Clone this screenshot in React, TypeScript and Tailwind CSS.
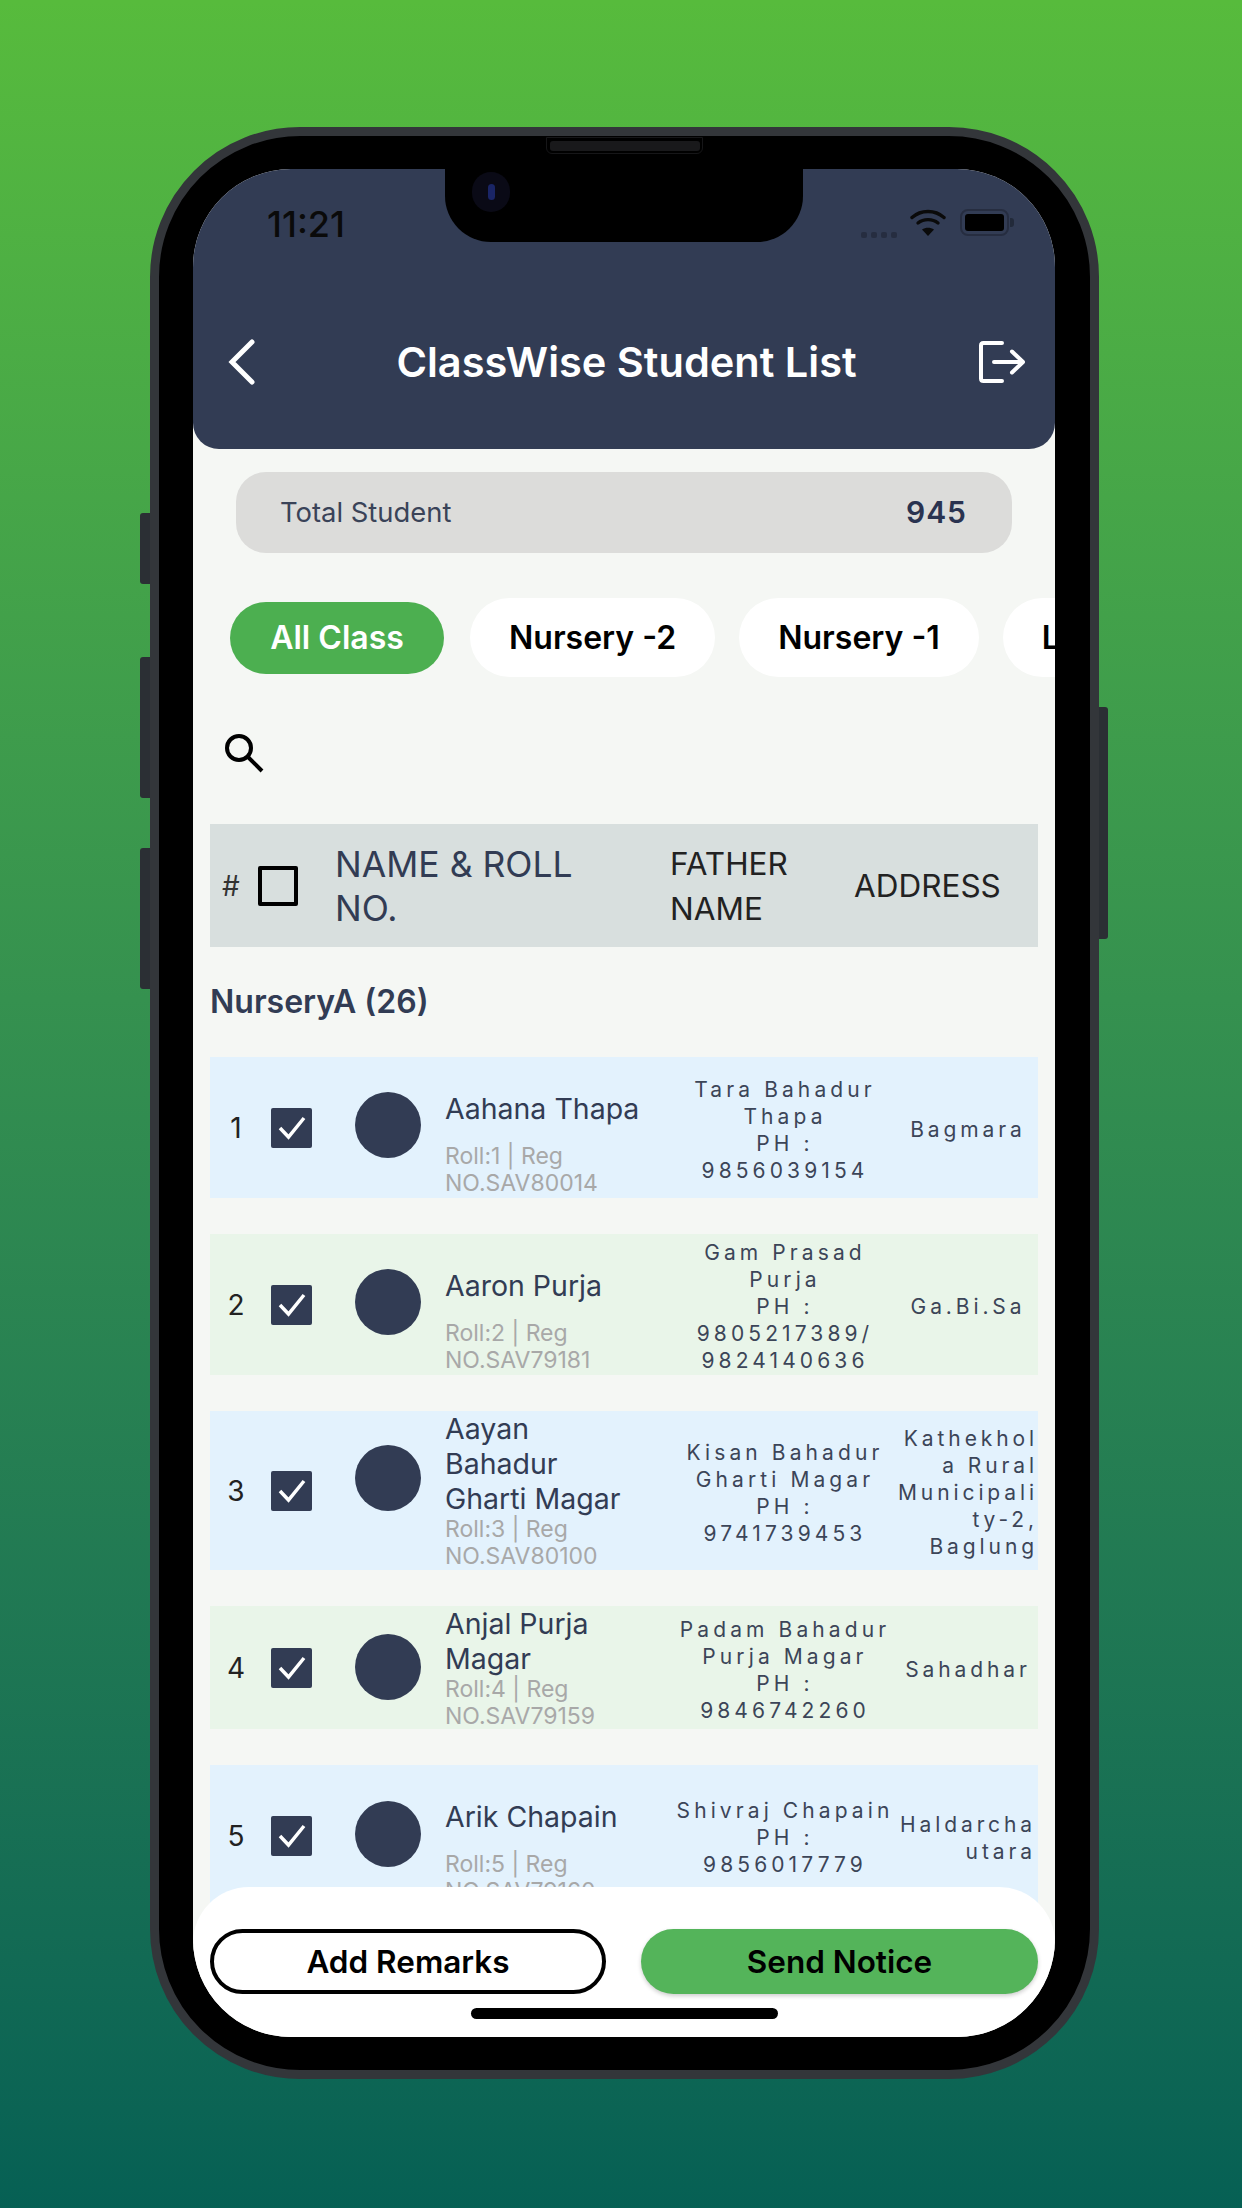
import React from "react";

type Row = {
  n: number;
  name: string[];
  roll: string[];
  father: string[];
  addr: string[];
  avatarTop: string;
  bg: string;
  minH?: string;
};

const rows: Row[] = [
  { n: 1, name: ["Aahana Thapa"], roll: ["Roll:1 | Reg", "NO.SAV80014"], father: ["Tara Bahadur", "Thapa", "PH :", "9856039154"], addr: ["Bagmara"], avatarTop: "mt-[35px]", bg: "bg-[#e3f2fd]" },
  { n: 2, name: ["Aaron Purja"], roll: ["Roll:2 | Reg", "NO.SAV79181"], father: ["Gam Prasad", "Purja", "PH :", "9805217389/", "9824140636"], addr: ["Ga.Bi.Sa"], avatarTop: "mt-[35px]", bg: "bg-[#e9f5e9]" },
  { n: 3, name: ["Aayan", "Bahadur", "Gharti Magar"], roll: ["Roll:3 | Reg", "NO.SAV80100"], father: ["Kisan Bahadur", "Gharti Magar", "PH :", "9741739453"], addr: ["Kathekhol", "a Rural", "Municipali", "ty-2,", "Baglung"], avatarTop: "mt-[34px]", bg: "bg-[#e3f2fd]", minH: "min-h-[159px]" },
  { n: 4, name: ["Anjal Purja", "Magar"], roll: ["Roll:4 | Reg", "NO.SAV79159"], father: ["Padam Bahadur", "Purja Magar", "PH :", "9846742260"], addr: ["Sahadhar"], avatarTop: "mt-[28px]", bg: "bg-[#e9f5e9]" },
  { n: 5, name: ["Arik Chapain"], roll: ["Roll:5 | Reg", "NO.SAV79160"], father: ["Shivraj Chapain", "PH :", "9856017779"], addr: ["Haldarcha", "utara"], avatarTop: "mt-[36px]", bg: "bg-[#e3f2fd]" },
];

function Lines({ items }: { items: string[] }) {
  return (
    <>
      {items.map((l) => (
        <div key={l}>{l}</div>
      ))}
    </>
  );
}

function StudentRow({ r }: { r: Row }) {
  const single = r.name.length === 1;
  return (
    <div className={`flex items-center mx-[17px] mb-[36px] ${r.bg} ${r.minH ?? ""}`}>
      <div className="w-[52px] text-center text-[28px] text-[#222]">{r.n}</div>
      <div className="ml-[9px] w-[41px] h-[40px] bg-[#323c54] rounded-[2px] flex items-center justify-center">
        <svg viewBox="0 0 40 40" className="w-[40px] h-[40px]" fill="none" stroke="#fff" strokeWidth="3.5">
          <path d="M8 20 L16.5 29 L32 10" />
        </svg>
      </div>
      <div className={`self-start ml-[43px] w-[66px] h-[66px] rounded-full bg-[#323c54] ${r.avatarTop}`} />
      <div className={`self-start ml-[24px] w-[225px] ${single ? "pt-[34px] pb-[2px]" : ""}`}>
        <div className={`text-[28.5px] leading-[35px] text-[#323c54] ${single ? "mb-[17px]" : ""}`}>
          <Lines items={r.name} />
        </div>
        <div className="text-[23px] leading-[26.5px] text-[#a8a8a8]">
          <Lines items={r.roll} />
        </div>
      </div>
      <div className="w-[230px] pt-[4px] text-center text-[21px] leading-[27px] tracking-[4.1px] text-[#3c4558] whitespace-nowrap">
        <Lines items={r.father} />
      </div>
      <div className="w-[136px] pt-[4px] flex justify-center">
        <div className="text-right text-[21px] leading-[27px] tracking-[3.9px] text-[#3c4558] whitespace-nowrap">
          <Lines items={r.addr} />
        </div>
      </div>
    </div>
  );
}

function Chip({ label, active }: { label: string; active?: boolean }) {
  return active ? (
    <div className="shrink-0 w-[214px] h-[72px] mr-[26px] rounded-full bg-[#4caf50] flex items-center justify-center text-[32px] font-semibold text-white">
      {label}
    </div>
  ) : (
    <div className="shrink-0 h-[79px] px-[39px] mr-[24px] rounded-full bg-white flex items-center justify-center text-[32px] font-semibold text-black whitespace-nowrap">
      {label}
    </div>
  );
}

export default function App() {
  return (
    <div className="w-[1242px] h-[2208px] overflow-hidden pt-[127px] bg-linear-to-b from-[#57bb3c] to-[#066054] font-[Inter,sans-serif]">
      <div className="relative ml-[150px] w-[949px] h-[1952px] rounded-[150px] bg-black border-[9px] border-[#33363a] pl-[34px] pr-[33px] py-[33px]">
        {/* side buttons */}
        <div className="absolute left-[-19px] top-[377px] w-[10px] h-[71px] rounded-l-[3px] bg-[#2b2f34]" />
        <div className="absolute left-[-19px] top-[521px] w-[10px] h-[141px] rounded-l-[3px] bg-[#2b2f34]" />
        <div className="absolute left-[-19px] top-[712px] w-[10px] h-[141px] rounded-l-[3px] bg-[#2b2f34]" />
        <div className="absolute right-[-18px] top-[571px] w-[9px] h-[232px] rounded-r-[3px] bg-[#2b2f34]" />
        {/* speaker */}
        <div className="absolute left-[387px] top-[1px] w-[157px] h-[17px] rounded-b-[6px] bg-black border border-[#161618] flex items-center justify-center">
          <div className="w-[150px] h-[10px] rounded-[3px] bg-[#19191b]" />
        </div>

        <div className="relative w-[862px] h-[1868px] rounded-[98px] overflow-hidden bg-[#f5f7f4]">
          {/* notch */}
          <div className="absolute left-[252px] top-0 w-[358px] h-[73px] bg-black rounded-b-[46px] flex items-start">
            <div className="ml-[27px] mt-[3px] w-[38px] h-[40px] rounded-full bg-[#0a0a16] flex items-center justify-center">
              <div className="w-[7px] h-[16px] rounded-full bg-[#1a2566]" />
            </div>
          </div>

          {/* header */}
          <div className="h-[280px] bg-[#323c54] rounded-b-[26px] flex flex-col">
            <div className="flex items-start h-[122px] pt-[33px] pl-[74px] pr-[41px]">
              <div className="text-[36px] leading-[44px] font-medium text-[#0a0a0a]">11:21</div>
              <div className="ml-auto flex items-start">
                <div className="flex gap-[4px] mt-[30px]">
                  <div className="w-[6px] h-[6px] rounded-[2px] bg-[#262d40]" />
                  <div className="w-[6px] h-[6px] rounded-[2px] bg-[#262d40]" />
                  <div className="w-[6px] h-[6px] rounded-[2px] bg-[#262d40]" />
                  <div className="w-[6px] h-[6px] rounded-[2px] bg-[#262d40]" />
                </div>
                <svg viewBox="0 0 36 27" className="ml-[13px] mt-[7px] w-[36px] h-[27px]" fill="none" stroke="#0a0a0a" strokeWidth="3.4" strokeLinecap="round">
                  <path d="M2 8.5 C11 0.5 25 0.5 34 8.5" />
                  <path d="M8 14 C13.5 9.5 22.5 9.5 28 14" />
                  <path d="M18 27 L12 20.5 C15.5 18 20.5 18 24 20.5 Z" fill="#0a0a0a" stroke="none" />
                </svg>
                <div className="ml-[14px] mt-[7px] w-[49px] h-[27px] rounded-[8px] border-[2px] border-[#262d40] flex items-center justify-center">
                  <div className="w-[39px] h-[17px] rounded-[3px] bg-black" />
                </div>
                <div className="ml-[1px] mt-[16px] w-[4px] h-[9px] rounded-r-[3px] bg-[#222a3a]" />
              </div>
            </div>
            <div className="flex items-center justify-between h-[72px] mt-[35px] pl-[35px] pr-[30px]">
              <div className="w-[46px]">
                <svg viewBox="0 0 28 46" className="w-[28px] h-[46px]" fill="none" stroke="#fff" strokeWidth="5" strokeLinecap="round" strokeLinejoin="miter">
                  <path d="M24 3 L4 23 L24 43" />
                </svg>
              </div>
              <div className="text-[41.5px] font-semibold text-white whitespace-nowrap">ClassWise Student List</div>
              <svg viewBox="0 0 46 44" className="w-[46px] h-[44px]" fill="none" stroke="#fff" strokeWidth="4" strokeLinecap="round" strokeLinejoin="round">
                <path d="M23 3 H4.5 Q2 3 2 5.5 V38.5 Q2 41 4.5 41 H23" />
                <path d="M15 22 H43 M33 11.5 L44 22 L33 32.5" />
              </svg>
            </div>
          </div>

          {/* total */}
          <div className="mt-[23px] mx-[43px] h-[81px] rounded-[30px] bg-[#dcdcda] flex items-center justify-between pl-[44px] pr-[45px]">
            <div className="text-[27.4px] text-[#3a4358]">Total Student</div>
            <div className="text-[30px] font-semibold tracking-[1px] text-[#2a3350]">945</div>
          </div>

          {/* chips */}
          <div className="mt-[45px] h-[79px] pl-[37px] flex items-center overflow-hidden">
            <Chip label="All Class" active />
            <Chip label="Nursery -2" />
            <Chip label="Nursery -1" />
            <Chip label="LKG" />
          </div>

          {/* search */}
          <div className="mt-[56px] ml-[31px] h-[39px]">
            <svg viewBox="0 0 40 40" className="w-[40px] h-[40px]" fill="none" stroke="#000" strokeWidth="4">
              <circle cx="15" cy="15" r="12" />
              <path d="M23.5 23.5 L38 38" />
            </svg>
          </div>

          {/* table head */}
          <div className="mt-[52px] mx-[17px] h-[123px] bg-[#d8dfde] flex items-center">
            <div className="ml-[12px] w-[36px] text-[28px] text-[#333]">#</div>
            <div className="w-[40px] h-[40px] border-[4px] border-black rounded-[2px]" />
            <div className="ml-[37px] w-[335px] pt-[2px] text-[35.5px] leading-[44px] text-[#323c54]">
              NAME &amp; ROLL
              <br />
              NO.
            </div>
            <div className="w-[184px] text-[31.5px] leading-[45px] text-[#222]">
              FATHER
              <br />
              NAME
            </div>
            <div className="text-[31.5px] text-[#222]">ADDRESS</div>
          </div>

          <div className="mt-[37px] ml-[17px] mb-[37px] text-[32px] leading-[36px] font-semibold text-[#323c54]">NurseryA (26)</div>

          {rows.map((r) => (
            <StudentRow key={r.n} r={r} />
          ))}

          {/* bottom sheet */}
          <div className="absolute left-0 right-0 bottom-0 h-[150px] bg-white rounded-t-[56px] px-[17px] pt-[42px]">
            <div className="flex justify-between">
              <div className="w-[396px] h-[65px] rounded-full bg-white border-[4px] border-black flex items-center justify-center text-[31.5px] font-semibold text-black">
                Add Remarks
              </div>
              <div className="w-[397px] h-[65px] rounded-full bg-[#54b45a] shadow-[0_2px_4px_rgba(0,0,0,0.2)] flex items-center justify-center text-[31.5px] font-semibold text-black">
                Send Notice
              </div>
            </div>
            <div className="mt-[14px] mx-auto w-[307px] h-[11px] rounded-full bg-black" />
          </div>
        </div>
      </div>
    </div>
  );
}
